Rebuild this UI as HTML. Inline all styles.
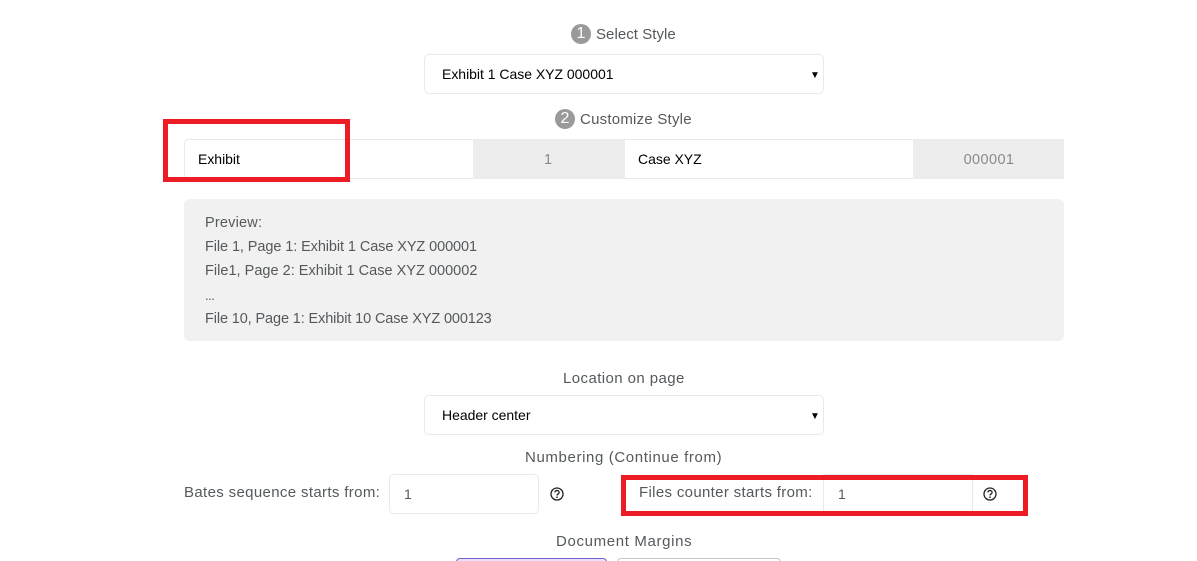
<!DOCTYPE html>
<html><head><meta charset="utf-8">
<style>
html,body{margin:0;padding:0;background:#fff;width:1197px;height:561px;overflow:hidden}
body{position:relative;font-family:"Liberation Sans",sans-serif;font-size:14.5px;color:#55595c}
.t{position:absolute;white-space:nowrap;line-height:20px;height:20px}
.l{font-size:15px}
.b{position:absolute;box-sizing:border-box}
.sel{background:#fff;border:1px solid #e9e8f2;border-radius:5px}
.blk{color:#000;font-size:14px;letter-spacing:-.02px}
.num{position:absolute;width:20px;height:20px;border-radius:50%;background:#9a9a9a;color:#fff;text-align:center;line-height:20px;font-size:16px}
.red{position:absolute;box-sizing:border-box;border:5px solid #ed1c24}
svg{position:absolute}
</style></head><body>

<div class="num" style="left:571px;top:24px">1</div>
<div class="t l" style="left:596px;top:25px;letter-spacing:.05px">Select Style</div>
<div class="b sel" style="left:424px;top:54px;width:400px;height:40px"></div>
<div class="t blk" style="left:442px;top:64px">Exhibit 1 Case XYZ 000001</div>
<div class="t" style="left:810px;top:66px;font-size:10px;color:#000">▼</div>

<div class="num" style="left:555px;top:109px">2</div>
<div class="t l" style="left:580px;top:110px;letter-spacing:.23px">Customize Style</div>

<div class="b" style="left:184px;top:139px;width:880px;height:40px;border:1px solid #e9e8f2;border-radius:4px 0 0 4px;background:#fff"></div>
<div class="b" style="left:473px;top:139px;width:152px;height:40px;background:#ededee"></div>
<div class="b" style="left:913px;top:139px;width:151px;height:40px;background:#ededee"></div>
<div class="t blk" style="left:198px;top:149px">Exhibit</div>
<div class="t" style="left:473px;width:150px;text-align:center;top:150px;color:#8a8a8a">1</div>
<div class="t blk" style="left:638px;top:149px">Case XYZ</div>
<div class="t" style="left:914px;width:150px;text-align:center;top:150px;color:#8a8a8a;letter-spacing:.4px">000001</div>

<div class="b" style="left:184px;top:199px;width:880px;height:142px;background:#f1f1f1;border-radius:6px"></div>
<div class="t" style="left:205px;top:213px;letter-spacing:.2px">Preview:</div>
<div class="t" style="left:205px;top:237px;letter-spacing:-.09px">File 1, Page 1: Exhibit 1 Case XYZ 000001</div>
<div class="t" style="left:205px;top:261px;letter-spacing:.02px">File1, Page 2: Exhibit 1 Case XYZ 000002</div>
<div class="t" style="left:205px;top:286px;font-size:13px;letter-spacing:-.5px">...</div>
<div class="t" style="left:205px;top:309px;letter-spacing:-.12px">File 10, Page 1: Exhibit 10 Case XYZ 000123</div>

<div class="t l" style="left:563px;top:369px;letter-spacing:.42px">Location on page</div>
<div class="b sel" style="left:424px;top:395px;width:400px;height:40px"></div>
<div class="t blk" style="left:442px;top:405px">Header center</div>
<div class="t" style="left:810px;top:407px;font-size:10px;color:#000">▼</div>

<div class="t l" style="left:525px;top:448px;letter-spacing:.62px">Numbering (Continue from)</div>

<div class="t l" style="left:184px;top:483px;letter-spacing:.35px">Bates sequence starts from:</div>
<div class="b sel" style="left:389px;top:474px;width:150px;height:40px"></div>
<div class="t" style="left:404px;top:484px;font-size:14px">1</div>
<svg style="left:550px;top:487px" width="14" height="14" viewBox="0 0 14 14"><circle cx="7" cy="7" r="6" fill="none" stroke="#222" stroke-width="1.3"/><path d="M4.9 5.4a2.1 1.9 0 1 1 3.2 1.6c-.7.4-1.1.7-1.1 1.5" fill="none" stroke="#222" stroke-width="1.3"/><circle cx="7" cy="10.2" r=".85" fill="#222"/></svg>

<div class="b" style="left:823px;top:474px;width:150px;height:40px;border:1px solid #e9e8f2"></div>
<div class="t l" style="left:639px;top:483px;letter-spacing:.33px">Files counter starts from:</div>
<div class="t" style="left:838px;top:484px;font-size:14px">1</div>
<svg style="left:983px;top:487px" width="14" height="14" viewBox="0 0 14 14"><circle cx="7" cy="7" r="6" fill="none" stroke="#222" stroke-width="1.3"/><path d="M4.9 5.4a2.1 1.9 0 1 1 3.2 1.6c-.7.4-1.1.7-1.1 1.5" fill="none" stroke="#222" stroke-width="1.3"/><circle cx="7" cy="10.2" r=".85" fill="#222"/></svg>

<div class="t l" style="left:556px;top:532px;letter-spacing:.65px">Document Margins</div>
<div class="b" style="left:456px;top:558px;width:151px;height:20px;border:1px solid #7a5fd0;border-radius:4px;background:#e8e3fb"></div>
<div class="b" style="left:617px;top:558px;width:164px;height:20px;border:1px solid #c8c8c8;border-radius:4px;background:#fff"></div>

<div class="red" style="left:163px;top:119px;width:187px;height:63px"></div>
<div class="red" style="left:621px;top:475px;width:407px;height:41px"></div>
</body></html>
